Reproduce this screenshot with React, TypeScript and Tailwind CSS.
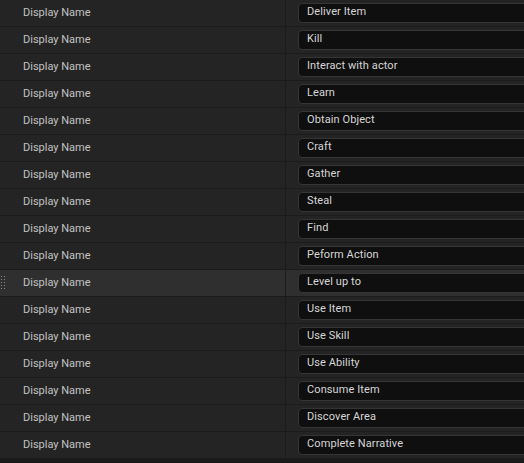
import React from "react";

const items = [
  "Deliver Item",
  "Kill",
  "Interact with actor",
  "Learn",
  "Obtain Object",
  "Craft",
  "Gather",
  "Steal",
  "Find",
  "Peform Action",
  "Level up to",
  "Use Item",
  "Use Skill",
  "Use Ability",
  "Consume Item",
  "Discover Area",
  "Complete Narrative",
];

function Grip() {
  return (
    <div className="absolute left-[1px] top-[6px] grid grid-cols-2 gap-x-[2px] gap-y-[2px]">
      {Array.from({ length: 10 }).map((_, i) => (
        <div key={i} className="w-[1px] h-[1px] bg-[#8a8a8a]" />
      ))}
    </div>
  );
}

export default function App() {
  return (
    <div className="w-[524px] h-[463px] bg-[#1a1a1a] overflow-hidden font-['Roboto','Liberation_Sans',sans-serif] text-[11px]">
      {items.map((name, i) => {
        const hl = i === 10;
        return (
          <div
            key={name}
            className={`relative flex h-[27px] border-b border-[#1b1b1b] ${hl ? "bg-[#2f2f2f]" : "bg-[#242424]"}`}
          >
            {hl && <Grip />}
            <div className="w-[285px] flex items-center pl-[23px] text-[#c2c2c2]">Display Name</div>
            <div className="w-[1px] bg-[#1b1b1b]" />
            <div className="flex-1 flex items-center pl-[12px] overflow-hidden">
              <div className="h-[20px] w-[260px] shrink-0 rounded-[4px] bg-[#0f0f0f] border border-[#353535] flex items-center pl-[8px] pb-[2px] tracking-[0.1px] text-[#d6d6d6]">
                {name}
              </div>
            </div>
          </div>
        );
      })}
    </div>
  );
}
